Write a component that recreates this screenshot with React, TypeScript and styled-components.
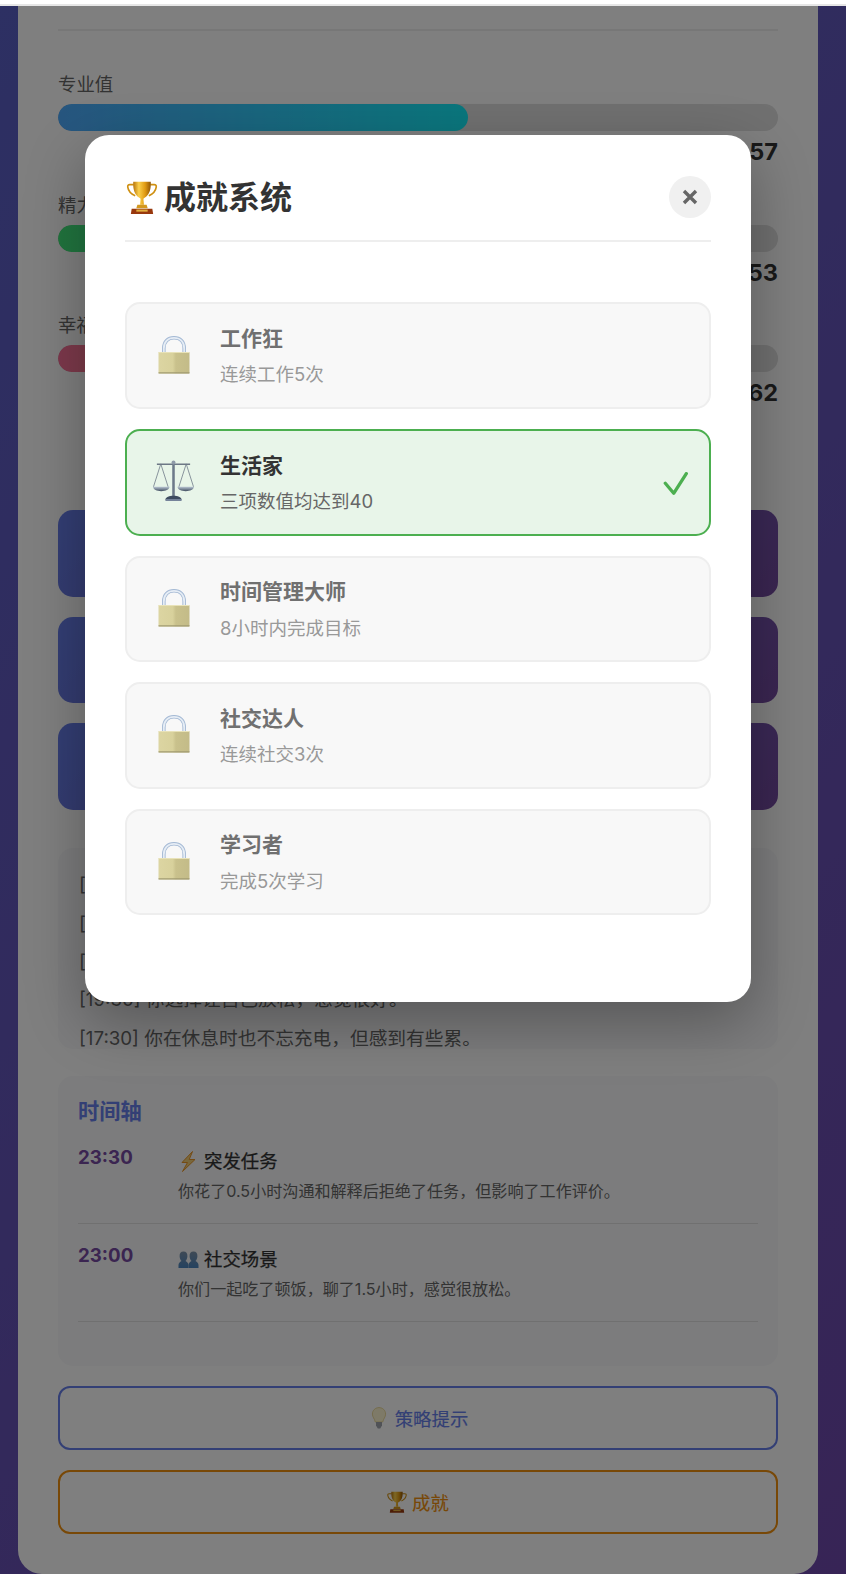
import React from "react";
import styled, { createGlobalStyle } from "styled-components";

const Global = createGlobalStyle`
  html, body { margin: 0; padding: 0; background: #fff; }
  body { font-family: Inter, "Noto Sans CJK SC", sans-serif; color: #333; }
  * { box-sizing: border-box; }
`;

const TopStrip = styled.div`
  height: 6px;
  background: #fff;
  border-bottom: 2px solid #e6e6e6;
`;

const Stage = styled.div`
  position: relative;
  height: 1568px;
  overflow: hidden;
  padding: 0 28px 0 18px;
  background: linear-gradient(135deg, #5a60c6 0%, #6f49ac 100%);
`;

const Card = styled.main`
  height: 100%;
  padding: 23px 40px 40px;
  background: #fff;
  border-radius: 0 0 24px 24px;
`;

const Rule = styled.div`
  height: 2px;
  background: #eee;
  margin-bottom: 39px;
`;

const Stat = styled.section`
  height: 120.5px;
`;

const StatLabel = styled.div`
  font-size: 18.4px;
  line-height: 28.5px;
  color: #666;
  margin-bottom: 5.5px;
`;

const Track = styled.div`
  height: 27px;
  border-radius: 14px;
  background: #e0e0e0;
  overflow: hidden;
`;

const Fill = styled.div<{ $from: string; $to: string }>`
  height: 100%;
  border-radius: 14px;
  background: linear-gradient(90deg, ${(p) => p.$from}, ${(p) => p.$to});
`;

const StatValue = styled.div`
  margin-top: 6px;
  text-align: right;
  font-size: 23.5px;
  line-height: 29px;
  font-weight: 700;
  color: #333;
`;

const Actions = styled.div`
  display: flex;
  flex-direction: column;
  gap: 20px;
  margin-top: 78.5px;
`;

const ActionTile = styled.div`
  height: 86.6px;
  border-radius: 15px;
  background: linear-gradient(135deg, #667eea, #764ba2);
`;

const LogBox = styled.section`
  height: 201px;
  margin-top: 38.4px;
  padding: 23px 21px 0;
  overflow: hidden;
  border-radius: 15px;
  background: #f8f9fa;
`;

const LogLine = styled.p`
  margin: 0 0 9.6px;
  font-size: 18.72px;
  line-height: 28.8px;
  color: #666;
`;

const Timeline = styled.section`
  height: 290px;
  margin-top: 27px;
  padding: 19px 20px 20px;
  border-radius: 15px;
  background: #f8f9fa;
`;

const TimelineTitle = styled.h3`
  margin: 0 0 16px;
  font-size: 21.2px;
  line-height: 33px;
  font-weight: 700;
  color: #667eea;
`;

const Event = styled.article`
  display: flex;
  padding-bottom: 18.4px;
  margin-bottom: 18px;
  border-bottom: 1px solid #e0e0e0;
`;

const EventTime = styled.div`
  flex: 0 0 100px;
  font-size: 18.7px;
  line-height: 28px;
  font-weight: 700;
  color: #764ba2;
`;

const EventBody = styled.div`
  padding-top: 2px;
`;

const EventTitle = styled.div`
  display: flex;
  align-items: center;
  gap: 5px;
  font-size: 18.4px;
  line-height: 30px;
  font-weight: 400;
  -webkit-text-stroke: 0.25px currentColor;
  color: #333;
`;

const EventDesc = styled.div`
  margin-top: 3px;
  font-size: 16.08px;
  line-height: 25.6px;
  color: #666;
`;

const OutlineButton = styled.button<{ $color: string; $top: number }>`
  display: flex;
  align-items: center;
  justify-content: center;
  gap: 5px;
  width: 100%;
  height: 63.5px;
  margin-top: ${(p) => p.$top}px;
  padding: 0;
  border: 2px solid ${(p) => p.$color};
  border-radius: 12px;
  background: transparent;
  font-family: inherit;
  font-size: 18.4px;
  font-weight: 400;
  -webkit-text-stroke: 0.15px currentColor;
  color: ${(p) => p.$color};
`;

const Overlay = styled.div`
  position: absolute;
  inset: 0;
  display: flex;
  justify-content: center;
  align-items: flex-start;
  padding: 129px 10px 0 0;
  background: rgba(0, 0, 0, 0.5);
`;

const Modal = styled.div`
  width: 666px;
  padding: 40px;
  border-radius: 24px;
  background: #fff;
  box-shadow: 0 20px 60px rgba(0, 0, 0, 0.3);
`;

const ModalHeader = styled.header`
  display: flex;
  align-items: center;
  justify-content: space-between;
  height: 67px;
  padding: 1px 0 22px;
  border-bottom: 2px solid #eee;
  margin-bottom: 60.4px;
`;

const ModalTitle = styled.h2`
  display: flex;
  align-items: center;
  gap: 5px;
  margin: 1px 0 0;
  font-size: 32px;
  line-height: 44px;
  font-weight: 700;
  color: #333;
`;

const CloseButton = styled.button`
  display: flex;
  align-items: center;
  justify-content: center;
  width: 42px;
  height: 42px;
  padding: 0;
  border: 0;
  border-radius: 50%;
  background: #f0f0f0;
`;

const AchievementList = styled.div`
  display: flex;
  flex-direction: column;
  gap: 20px;
  margin-bottom: 47px;
`;

const Achievement = styled.div<{ $done?: boolean }>`
  display: flex;
  align-items: center;
  height: 106.6px;
  padding: 0 20.5px 0 25px;
  border: 2px solid ${(p) => (p.$done ? "#4caf50" : "#eee")};
  border-radius: 15px;
  background: ${(p) => (p.$done ? "#e8f5e9" : "#f8f8f8")};
`;

const IconSlot = styled.div`
  flex: 0 0 43px;
  display: flex;
  justify-content: center;
  margin: -2px 25px 0 0;
`;

const AchievementBody = styled.div`
  flex: 1;
`;

const AchievementName = styled.div<{ $done?: boolean }>`
  margin-bottom: 5.5px;
  font-size: 21px;
  line-height: 33px;
  font-weight: 700;
  color: ${(p) => (p.$done ? "#333" : "#707070")};
`;

const AchievementDesc = styled.div<{ $done?: boolean }>`
  font-size: 18.5px;
  line-height: 29px;
  color: ${(p) => (p.$done ? "#666" : "#999")};
`;

const CheckMark = styled.svg`
  margin-top: 3px;
`;

const Trophy = ({ w, h }: { w: number; h: number }) => (
  <svg width={w} height={h} viewBox="0 0 30 32" aria-hidden="true">
    <defs>
      <linearGradient id="cup" x1="0" x2="1" y1="0" y2="0">
        <stop offset="0" stopColor="#b8740a" />
        <stop offset="0.32" stopColor="#fbd04c" />
        <stop offset="0.68" stopColor="#e09a12" />
        <stop offset="1" stopColor="#8f5506" />
      </linearGradient>
    </defs>
    <path d="M7 3.500H3.200C1.600 3.500 1 4.600 1.200 6c.5 3.600 3.200 6.600 7.200 8.400M23 3.500h3.800c1.600 0 2.200 1.100 2 2.500-.5 3.600-3.200 6.600-7.200 8.400" fill="none" stroke="#cf9012" strokeWidth="1.600" />
    <path d="M6.500 .8h17c.3 6.400-.8 13-6.300 15.600-.6.3-.9.8-.8 1.500l.5 5.100h-3.800l.5-5.100c.1-.7-.2-1.200-.8-1.500C7.300 13.800 6.200 7.200 6.500 .8z" fill="url(#cup)" />
    <path d="M10.500 23h9l1 3.500h-11z" fill="#d3981f" />
    <path d="M5 27h20l.8 5H4.200z" fill="#98380d" />
    <rect x="9.500" y="27.700" width="11" height="2" fill="#e2b040" />
  </svg>
);

const Lock = () => (
  <svg width="32" height="38" viewBox="0 0 32 38" aria-hidden="true">
    <defs>
      <linearGradient id="lockBody" x1="0" x2="1" y1="0" y2="0">
        <stop offset="0" stopColor="#dcd5a2" />
        <stop offset="0.46" stopColor="#d8d19c" />
        <stop offset="0.56" stopColor="#c9c18c" />
        <stop offset="1" stopColor="#c3bb88" />
      </linearGradient>
    </defs>
    <path d="M5.800 18V12.500C5.800 5.500 10 1.800 16 1.800s10.200 3.700 10.200 10.700V18" fill="none" stroke="#a4b9d4" strokeWidth="3.600" />
    <path d="M5.800 18V12.500C5.800 5.500 10 1.800 16 1.800s10.200 3.700 10.200 10.700V18" fill="none" stroke="#e6edf5" strokeWidth="1.800" />
    <rect x="0.500" y="16" width="31" height="21.500" rx="0.800" fill="url(#lockBody)" />
    <rect x="0.500" y="16" width="31" height="1" fill="#e8e2b8" />
    <rect x="0.500" y="36.300" width="31" height="1.200" fill="#9f9970" />
  </svg>
);

const Scales = () => (
  <svg width="43" height="42" viewBox="0 0 44 42" aria-hidden="true">
    <defs>
      <linearGradient id="pan" x1="0" x2="0" y1="0" y2="1">
        <stop offset="0" stopColor="#b8c4d2" />
        <stop offset="1" stopColor="#3f4c5e" />
      </linearGradient>
    </defs>
    <path d="M9 3.500L1.500 27M9 3.500L16.500 27M35 3.500L27.500 27M35 3.500L42.500 27" stroke="#6d7886" strokeWidth="0.800" fill="none" />
    <path d="M5 3.800h34" stroke="#6d7886" strokeWidth="1.400" />
    <rect x="20.700" y="1.500" width="2.600" height="35" fill="#6d7a8a" />
    <circle cx="22" cy="2" r="2" fill="#8e9aa8" />
    <path d="M1 27h17c-.6 3-3.800 4.500-8.500 4.500S1.600 30 1 27zM26 27h17c-.6 3-3.800 4.500-8.500 4.500S26.600 30 26 27z" fill="url(#pan)" />
    <path d="M13.500 40c.8-2.500 4-4 8.500-4s7.700 1.500 8.500 4z" fill="#3e4c60" />
    <rect x="13.500" y="39.500" width="17" height="2" rx="1" fill="#75839a" />
  </svg>
);

const Bolt = () => (
  <svg width="21" height="21" viewBox="0 0 21 21" aria-hidden="true">
    <path d="M14.500.5L4 11.500h5.500L4.500 20.500 17 8.500h-5.800z" fill="#f0cf78" stroke="#ea9526" strokeWidth="1" strokeLinejoin="round" />
  </svg>
);

const People = () => (
  <svg width="21" height="17" viewBox="0 0 21 17" aria-hidden="true">
    <defs>
      <linearGradient id="busts" x1="0" x2="0" y1="0" y2="1">
        <stop offset="0" stopColor="#7d93ab" />
        <stop offset="1" stopColor="#4a85c0" />
      </linearGradient>
    </defs>
    <path d="M5.500.5C2.700.5 1.500 2.600 1.600 5.200c.1 2.300.9 3.700 1.900 4.800C1.800 11 .5 12.300.5 14v3h10v-3c0-1.700-1.300-3-3-4 1-1.100 1.800-2.500 1.900-4.800C9.500 2.600 8.300.5 5.500.5z" fill="url(#busts)" />
    <path d="M15.500.5c-2.800 0-4 2.100-3.900 4.700.1 2.300.9 3.700 1.900 4.800-1.700 1-3 2.300-3 4v3h10v-3c0-1.700-1.300-3-3-4 1-1.100 1.800-2.500 1.900-4.800.1-2.600-1.100-4.700-3.900-4.700z" fill="url(#busts)" />
  </svg>
);

const Bulb = () => (
  <svg width="22" height="22" viewBox="0 0 22 22" aria-hidden="true">
    <path d="M11 .6C7.300.6 4.400 3.400 4.400 7.100c0 3 2.200 4.600 2.900 7.900h7.400c.7-3.300 2.900-4.900 2.900-7.900C17.600 3.400 14.700.6 11 .6z" fill="#fdf5d0" stroke="#e6d48e" strokeWidth="0.900" />
    <path d="M8 15h6v3.500l-1.800 3h-2.400L8 18.500z" fill="#a0a4ac" />
  </svg>
);

const Check = () => (
  <CheckMark width="26" height="24" viewBox="0 0 26 24" aria-hidden="true">
    <path d="M2.300 11.300L10.700 21.300 23.300 1.700" fill="none" stroke="#4caf50" strokeWidth="3.300" strokeLinecap="round" strokeLinejoin="round" />
  </CheckMark>
);

const Cross = () => (
  <svg width="16" height="16" viewBox="0 0 16 16" aria-hidden="true">
    <path d="M2 2l12 12M14 2L2 14" stroke="#666" strokeWidth="3.400" />
  </svg>
);

const stats = [
  { name: "专业值", value: 57, from: "#4facfe", to: "#14eefa" },
  { name: "精力值", value: 53, from: "#43e97b", to: "#38f9d7" },
  { name: "幸福值", value: 62, from: "#fa709a", to: "#fee140" },
];

const logs = [
  "[",
  "[",
  "[",
  "[19:30] 你选择让自己放松，感觉很好。",
  "[17:30] 你在休息时也不忘充电，但感到有些累。",
];

const achievements = [
  { name: "工作狂", desc: "连续工作5次" },
  { name: "生活家", desc: "三项数值均达到40", done: true },
  { name: "时间管理大师", desc: "8小时内完成目标" },
  { name: "社交达人", desc: "连续社交3次" },
  { name: "学习者", desc: "完成5次学习" },
];

export default function App() {
  return (
    <>
      <Global />
      <TopStrip />
      <Stage>
        <Card>
          <Rule />
          {stats.map((s) => (
            <Stat key={s.name}>
              <StatLabel>{s.name}</StatLabel>
              <Track>
                <Fill $from={s.from} $to={s.to} style={{ width: `${s.value}%` }} />
              </Track>
              <StatValue>{s.value}</StatValue>
            </Stat>
          ))}
          <Actions>
            <ActionTile />
            <ActionTile />
            <ActionTile />
          </Actions>
          <LogBox>
            {logs.map((l, i) => (
              <LogLine key={i}>{l}</LogLine>
            ))}
          </LogBox>
          <Timeline>
            <TimelineTitle>时间轴</TimelineTitle>
            <Event>
              <EventTime>23:30</EventTime>
              <EventBody>
                <EventTitle>
                  <Bolt />
                  突发任务
                </EventTitle>
                <EventDesc>你花了0.5小时沟通和解释后拒绝了任务，但影响了工作评价。</EventDesc>
              </EventBody>
            </Event>
            <Event>
              <EventTime>23:00</EventTime>
              <EventBody>
                <EventTitle>
                  <People />
                  社交场景
                </EventTitle>
                <EventDesc>你们一起吃了顿饭，聊了1.5小时，感觉很放松。</EventDesc>
              </EventBody>
            </Event>
          </Timeline>
          <OutlineButton $color="#667eea" $top={20}>
            <Bulb />
            策略提示
          </OutlineButton>
          <OutlineButton $color="#f0900e" $top={20.5}>
            <Trophy w={20} h={22} />
            成就
          </OutlineButton>
        </Card>
        <Overlay>
          <Modal>
            <ModalHeader>
              <ModalTitle>
                <Trophy w={34} h={33} />
                成就系统
              </ModalTitle>
              <CloseButton aria-label="关闭">
                <Cross />
              </CloseButton>
            </ModalHeader>
            <AchievementList>
              {achievements.map((a) => (
                <Achievement key={a.name} $done={a.done}>
                  <IconSlot>{a.done ? <Scales /> : <Lock />}</IconSlot>
                  <AchievementBody>
                    <AchievementName $done={a.done}>{a.name}</AchievementName>
                    <AchievementDesc $done={a.done}>{a.desc}</AchievementDesc>
                  </AchievementBody>
                  {a.done && <Check />}
                </Achievement>
              ))}
            </AchievementList>
          </Modal>
        </Overlay>
      </Stage>
    </>
  );
}
